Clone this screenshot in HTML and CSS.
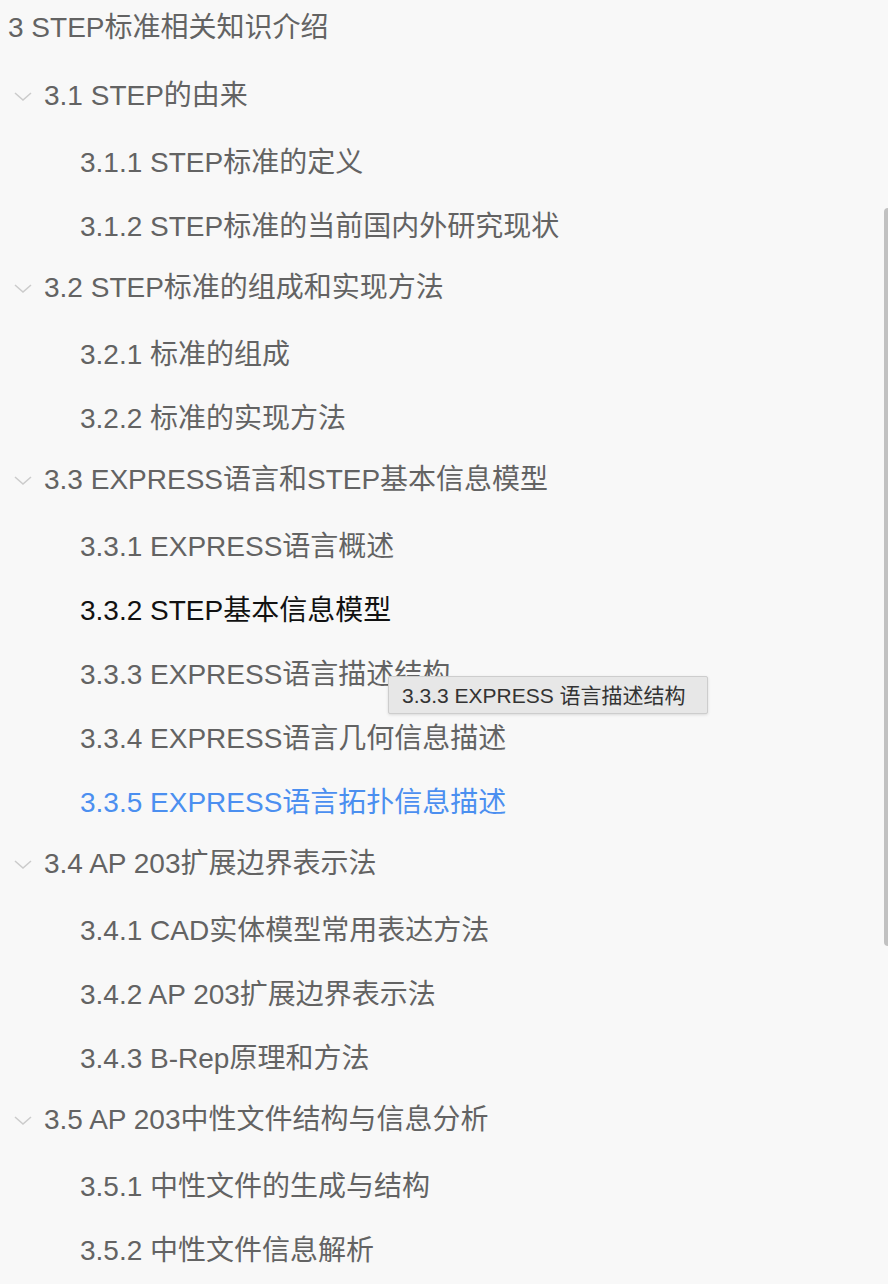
FILE: index.html
```html
<!DOCTYPE html>
<html lang="zh">
<head>
<meta charset="utf-8">
<title>目录</title>
<link rel="stylesheet" href="styles.css">
</head>
<body>
<div class="toc">
  <div class="title">3 STEP标准相关知识介绍</div>

  <div class="row l1"><svg class="chev" viewBox="0 0 18 9"><path d="M1 1 L9 8 L17 1"/></svg><span>3.1 STEP的由来</span></div>
  <div class="row l2"><span>3.1.1 STEP标准的定义</span></div>
  <div class="row l2"><span>3.1.2 STEP标准的当前国内外研究现状</span></div>

  <div class="row l1"><svg class="chev" viewBox="0 0 18 9"><path d="M1 1 L9 8 L17 1"/></svg><span>3.2 STEP标准的组成和实现方法</span></div>
  <div class="row l2"><span>3.2.1 标准的组成</span></div>
  <div class="row l2"><span>3.2.2 标准的实现方法</span></div>

  <div class="row l1"><svg class="chev" viewBox="0 0 18 9"><path d="M1 1 L9 8 L17 1"/></svg><span>3.3 EXPRESS语言和STEP基本信息模型</span></div>
  <div class="row l2"><span>3.3.1 EXPRESS语言概述</span></div>
  <div class="row l2 hover"><span>3.3.2 STEP基本信息模型</span></div>
  <div class="row l2"><span>3.3.3 EXPRESS语言描述结构</span></div>
  <div class="row l2"><span>3.3.4 EXPRESS语言几何信息描述</span></div>
  <div class="row l2 active"><span>3.3.5 EXPRESS语言拓扑信息描述</span></div>

  <div class="row l1"><svg class="chev" viewBox="0 0 18 9"><path d="M1 1 L9 8 L17 1"/></svg><span>3.4 AP 203扩展边界表示法</span></div>
  <div class="row l2"><span>3.4.1 CAD实体模型常用表达方法</span></div>
  <div class="row l2"><span>3.4.2 AP 203扩展边界表示法</span></div>
  <div class="row l2"><span>3.4.3 B-Rep原理和方法</span></div>

  <div class="row l1"><svg class="chev" viewBox="0 0 18 9"><path d="M1 1 L9 8 L17 1"/></svg><span>3.5 AP 203中性文件结构与信息分析</span></div>
  <div class="row l2"><span>3.5.1 中性文件的生成与结构</span></div>
  <div class="row l2"><span>3.5.2 中性文件信息解析</span></div>
</div>

<div class="tooltip">3.3.3 EXPRESS 语言描述结构</div>
<div class="scrollbar"></div>
</body>
</html>
```

FILE: styles.css
```css
html, body {
  margin: 0;
  padding: 0;
  background: #f8f8f8;
  height: 1284px;
  overflow: hidden;
}
body {
  position: relative;
  font-family: "Liberation Sans", "Noto Sans CJK SC", sans-serif;
  font-size: 28px;
  color: #636363;
}
.toc {
  display: flex;
  flex-direction: column;
  padding-top: 1px;
}
.title {
  height: 64px;
  line-height: 54px;
  padding-left: 8px;
  white-space: nowrap;
}
.row {
  height: 64px;
  display: flex;
  align-items: center;
  white-space: nowrap;
}
.row span {
  line-height: 32px;
}
.l1 {
  padding-left: 14px;
  padding-bottom: 3px;
  box-sizing: border-box;
}
.l1 .chev {
  width: 18px;
  height: 9px;
  margin-right: 12px;
  margin-top: 2px;
  flex: none;
}
.chev path {
  fill: none;
  stroke: #cbcbcb;
  stroke-width: 1.5;
}
.l2 {
  padding-left: 80px;
  padding-top: 3px;
  box-sizing: border-box;
}
.hover {
  color: #111111;
}
.active {
  color: #4b8ff0;
}
.tooltip {
  position: absolute;
  left: 388px;
  top: 676px;
  width: 320px;
  height: 38px;
  box-sizing: border-box;
  padding-left: 13px;
  line-height: 37px;
  font-size: 21px;
  color: #333333;
  background: #e7e7e7;
  border: 1px solid #cdcdcd;
  border-radius: 2px;
  box-shadow: 0 1px 3px rgba(0, 0, 0, 0.12);
  white-space: nowrap;
}
.scrollbar {
  position: absolute;
  right: -4px;
  top: 208px;
  width: 8px;
  height: 738px;
  border-radius: 4px;
  background: #c1c1c1;
}
```
